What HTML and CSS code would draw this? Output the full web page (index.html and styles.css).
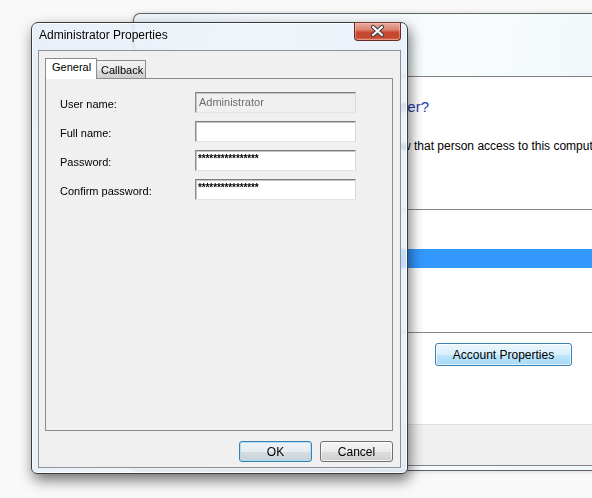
FILE: index.html
```html
<!DOCTYPE html>
<html>
<head>
<meta charset="utf-8">
<link rel="stylesheet" href="styles.css">
</head>
<body>
<div class="bgwin">
  <div class="client">
    <div class="client-main">
      <div class="heading">Who may connect to this computer?</div>
      <p class="desc"><span class="desc-pre">Select each person, then allo</span>w that person access to this computer.</p>
      <div class="list"><div class="row-sel"></div></div>
      <div class="btn-row"><button class="btn btn-hot">Account Properties</button></div>
    </div>
    <div class="footer"></div>
  </div>
</div>

<div class="dlg">
  <div class="title">Administrator Properties</div>
  <div class="close"><svg width="47" height="19" viewBox="0 0 47 19"><path d="M19 5 L28 13 M28 5 L19 13" stroke="#3a3a3a" stroke-width="4.2" stroke-linecap="round" fill="none"/><path d="M19 5 L28 13 M28 5 L19 13" stroke="#ffffff" stroke-width="2.2" stroke-linecap="round" fill="none"/></svg></div>
  <div class="panel">
    <div class="tabs">
      <div class="tab tab-active">General</div>
      <div class="tab">Callback</div>
    </div>
    <div class="tabpage">
      <div class="form">
        <label class="lbl">User name:</label>
        <div class="field field-disabled">Administrator</div>
        <label class="lbl">Full name:</label>
        <div class="field"></div>
        <label class="lbl">Password:</label>
        <div class="field field-pw">****************</div>
        <label class="lbl">Confirm password:</label>
        <div class="field field-pw">****************</div>
      </div>
    </div>
    <div class="actions">
      <button class="btn btn-default">OK</button>
      <button class="btn">Cancel</button>
    </div>
  </div>
</div>
</body>
</html>
```
FILE: styles.css
```css
html, body {
  margin: 0;
  padding: 0;
}
body {
  width: 592px;
  height: 498px;
  overflow: hidden;
  position: relative;
  background: #f9f9f9;
  font-family: "Liberation Sans", Arial, sans-serif;
  color: #000;
}

/* background window */
.bgwin {
  position: absolute;
  left: 133px;
  top: 13px;
  width: 480px;
  height: 458px;
  box-sizing: border-box;
  border: 1px solid #5e6468;
  border-right: none;
  border-radius: 7px 0 0 7px;
  background: linear-gradient(100deg, #eef5fa 0%, #f8fcfd 60%, #eef5f9 100%);
  padding: 62px 0 4px 6px;
  box-shadow: 0 0 5px rgba(0,0,0,0.18);
  display: flex;
  flex-direction: column;
}
.client {
  flex: 1;
  border: 1px solid #7f8386;
  border-right: none;
  background: #fff;
  display: flex;
  flex-direction: column;
}
.client-main {
  flex: 1;
  padding-top: 20px;
}
.heading {
  width: 288px;
  text-align: right;
  font-size: 15px;
  line-height: 20px;
  color: #1c3ca6;
  white-space: nowrap;
}
.desc {
  margin: 21px 0 0 0;
  font-size: 12px;
  line-height: 16px;
  white-space: nowrap;
}
.desc-pre {
  display: inline-block;
  width: 261px;
  text-align: right;
}
.list {
  margin-top: 55px;
  height: 124px;
  box-sizing: border-box;
  border-top: 1px solid #85888c;
  border-bottom: 1px solid #85888c;
  border-left: 1px solid #85888c;
  padding-top: 39px;
}
.row-sel {
  height: 19px;
  background: #3399ff;
}
.btn-row {
  margin-top: 10px;
  padding-left: 294px;
}
.footer {
  height: 40px;
  border-top: 1px solid #dfdfdf;
  background: #f0f0f0;
}

/* buttons */
.btn {
  box-sizing: border-box;
  height: 21px;
  width: 73px;
  padding: 0;
  font-family: "Liberation Sans", Arial, sans-serif;
  font-size: 12px;
  color: #000;
  border: 1px solid #707070;
  border-radius: 3px;
  background: linear-gradient(#f2f2f2 0%, #ebebeb 50%, #dddddd 51%, #cfcfcf 100%);
  box-shadow: inset 0 0 0 1px rgba(255,255,255,0.7);
}
.btn-default {
  border-color: #3c7fb1;
  box-shadow: inset 0 0 0 1px rgba(170,220,245,0.9);
  background: linear-gradient(#eef3f6 0%, #e6ecf0 50%, #d6dde3 51%, #c9d2d9 100%);
}
.btn-hot {
  width: 137px;
  height: 23px;
  border-color: #3c7fb1;
  background: linear-gradient(#eaf6fd 0%, #d9f0fc 50%, #bee6fd 51%, #a7d9f5 100%);
}

/* dialog */
.dlg {
  position: absolute;
  left: 31px;
  top: 22px;
  width: 377px;
  height: 452px;
  box-sizing: border-box;
  border: 1px solid #363c42;
  border-radius: 7px 7px 6px 6px;
  background: linear-gradient(100deg, rgba(226,236,247,0.82) 0%, rgba(238,244,250,0.8) 45%, rgba(228,237,247,0.8) 100%);
  backdrop-filter: blur(1px);
  box-shadow: 2px 6px 14px rgba(0,0,0,0.55), inset 0 0 0 1px rgba(255,255,255,0.8);
  padding: 0 6px 5px 6px;
  display: flex;
  flex-direction: column;
  z-index: 2;
}
.title {
  height: 27px;
  line-height: 24px;
  padding-left: 1px;
  font-size: 12px;
  color: #000;
  text-shadow: 0 0 6px rgba(255,255,255,0.9);
}
.close {
  position: absolute;
  top: -1px;
  right: 6px;
  width: 47px;
  height: 19px;
  box-sizing: border-box;
  border: 1px solid #6a2b22;
  border-top-color: #7a3a30;
  border-radius: 0 0 4px 4px;
  background: linear-gradient(#e9aba0 0%, #dc8271 40%, #c8472f 55%, #c54a33 85%, #d67a5e 100%);
  box-shadow: inset 0 0 0 1px rgba(255,200,190,0.45);
}
.close svg {
  display: block;
  margin: -1px;
}
.panel {
  flex: 1;
  border: 1px solid #8c9197;
  background: #f0f0f0;
  padding: 7px 7px 0 6px;
  display: flex;
  flex-direction: column;
}
.tabs {
  height: 20px;
  display: flex;
  align-items: flex-end;
}
.tab {
  box-sizing: border-box;
  height: 18px;
  width: 49px;
  border: 1px solid #898c95;
  border-bottom: none;
  border-left: none;
  background: linear-gradient(#f2f2f2 0%, #ebebeb 50%, #dddddd 51%, #cfcfcf 100%);
  font-size: 11px;
  line-height: 18px;
  padding-left: 4px;
}
.tab-active {
  position: relative;
  z-index: 1;
  height: 21px;
  width: 52px;
  margin-bottom: -1px;
  border-left: 1px solid #898c95;
  background: #fff;
  padding-left: 6px;
  line-height: 17px;
}
.tabpage {
  box-sizing: border-box;
  width: 348px;
  height: 353px;
  border: 1px solid #898c95;
  background: #f0f0f0;
  padding: 13px 0 0 14px;
}
.form {
  display: grid;
  grid-template-columns: 135px 161px;
  row-gap: 8px;
}
.lbl {
  font-size: 11px;
  line-height: 21px;
  padding-top: 2px;
  height: 21px;
  box-sizing: border-box;
}
.field {
  box-sizing: border-box;
  height: 21px;
  background: #fff;
  border: 1px solid;
  border-color: #7d7d7d #d8d8d8 #e3e3e3 #8e8e8e;
  box-shadow: inset 1px 1px 0 #c4c4c4;
  font-size: 11px;
  line-height: 14px;
  padding: 2px 3px;
  white-space: nowrap;
  overflow: hidden;
}
.field-disabled {
  background: #f0f0f0;
  color: #6d6d6d;
  padding-top: 2px;
}
.field-pw {
  font-size: 10px;
  font-weight: bold;
  line-height: 10px;
  letter-spacing: -0.1px;
  padding: 3px 2px;
}
.actions {
  margin-top: 10px;
  width: 348px;
  display: flex;
  justify-content: flex-end;
  gap: 8px;
}
```
